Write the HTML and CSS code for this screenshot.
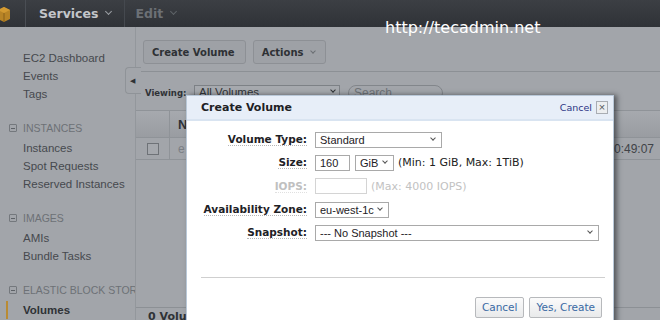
FILE: index.html
```html
<!DOCTYPE html>
<html lang="en">
<head>
  <meta charset="UTF-8">
  <title>EC2 Management Console - Create Volume</title>
  <link rel="stylesheet" href="styles.css">
</head>
<body>
  <div class="topbar">
    <div class="logo">
      <svg width="12" height="16" viewBox="0 0 12 16"><path d="M0 4 L6 1 L12 4 L12 13 L6 16 L0 13 Z" fill="#b88426"/><path d="M0 4 L6 7 L12 4 L6 1 Z" fill="#d39a31"/><path d="M6 7 L6 16" stroke="#8a6119" stroke-width="1"/></svg>
    </div>
    <div class="menu">Services <span class="chev"></span></div>
    <div class="menu disabled">Edit <span class="chev"></span></div>
  </div>

  <div class="layout">
    <div class="sidebar">
      <div class="nav-item">EC2 Dashboard</div>
      <div class="nav-item">Events</div>
      <div class="nav-item">Tags</div>

      <div class="nav-head"><span class="minus"></span>INSTANCES</div>
      <div class="nav-item">Instances</div>
      <div class="nav-item">Spot Requests</div>
      <div class="nav-item">Reserved Instances</div>

      <div class="nav-head"><span class="minus"></span>IMAGES</div>
      <div class="nav-item">AMIs</div>
      <div class="nav-item">Bundle Tasks</div>

      <div class="nav-head"><span class="minus"></span>ELASTIC BLOCK STORE</div>
      <div class="nav-item active">Volumes</div>
    </div>

    <div class="main">
      <div class="toolbar">
        <div class="tb-btn">Create Volume</div>
        <div class="tb-btn">Actions <span class="chev"></span></div>
      </div>
      <div class="filter">
        <span class="viewing">Viewing:</span>
        <div class="fake-select">All Volumes <span class="arr"></span></div>
        <div class="search">Search</div>
      </div>
      <div class="table">
        <div class="thead"><div class="cell-check"></div><div class="cell-name">N</div></div>
        <div class="trow">
          <div class="cell-check"><span class="checkbox"></span></div>
          <div class="cell-name dim">e</div>
          <div class="cell-time">10:49:07</div>
        </div>
      </div>
      <div class="footer-bar">0 Volumes selected</div>
    </div>
  </div>

  <div class="collapse-tab">&#9664;</div>

  <div class="watermark">http://tecadmin.net</div>

  <div class="dialog">
    <div class="dlg-head">
      <span class="dlg-title">Create Volume</span>
      <span class="dlg-close"><a>Cancel</a><span class="xbox">&#215;</span></span>
    </div>
    <div class="dlg-body">
      <div class="form-row">
        <label><span>Volume Type:</span></label>
        <div class="ctl"><div class="sel w-type">Standard <span class="arr"></span></div></div>
      </div>
      <div class="form-row">
        <label><span>Size:</span></label>
        <div class="ctl">
          <div class="inp w-size">160</div>
          <div class="sel w-unit">GiB <span class="arr"></span></div>
          <span class="hint">(Min: 1 GiB, Max: 1TiB)</span>
        </div>
      </div>
      <div class="form-row off">
        <label><span>IOPS:</span></label>
        <div class="ctl">
          <div class="inp w-iops"></div>
          <span class="hint">(Max: 4000 IOPS)</span>
        </div>
      </div>
      <div class="form-row">
        <label><span>Availability Zone:</span></label>
        <div class="ctl"><div class="sel w-zone">eu-west-1c <span class="arr"></span></div></div>
      </div>
      <div class="form-row">
        <label><span>Snapshot:</span></label>
        <div class="ctl"><div class="sel w-snap">--- No Snapshot --- <span class="arr"></span></div></div>
      </div>
      <div class="dlg-rule"></div>
      <div class="dlg-actions">
        <div class="btn">Cancel</div>
        <div class="btn">Yes, Create</div>
      </div>
    </div>
  </div>
</body>
</html>
```

FILE: styles.css
```css
* { box-sizing: border-box; }
body { margin: 0; width: 660px; height: 320px; overflow: hidden; position: relative; background: #a2a5aa; font-family: "Liberation Sans", Arial, sans-serif; font-size: 12px; color: #45484d; }

/* little chevrons used by menus and selects */
.chev, .arr { display: inline-block; width: 5px; height: 5px; border-right: 1.5px solid currentColor; border-bottom: 1.5px solid currentColor; transform: rotate(45deg); }

.topbar { height: 27px; background: linear-gradient(#3c3f44, #2f3237); display: flex; align-items: center; }
.logo { width: 26px; height: 27px; border-right: 1px solid #4a4e54; display: flex; align-items: center; }
.logo svg { margin-left: -2px; }
.menu { font-family: "DejaVu Sans", Verdana, sans-serif; font-weight: bold; font-size: 12.5px; color: #c3c6ca; padding: 0 13px; height: 27px; display: flex; align-items: center; gap: 8px; border-right: 1px solid #45494f; }
.menu .chev { color: #9a9ea3; margin-top: -4px; }
.menu.disabled { color: #6c7075; border-right: none; padding-left: 10px; }
.menu.disabled .chev { color: #5f6368; }

.layout { display: flex; height: 293px; }
.sidebar { width: 136px; border-right: 1px solid #93979c; padding-top: 22px; overflow: hidden; }
.nav-item { height: 18px; line-height: 18px; padding-left: 23px; color: #46494e; font-size: 11.5px; white-space: nowrap; }
.nav-head { height: 20px; margin-top: 16px; padding: 0 0 2px 9px; color: #6d7176; font-size: 10.5px; white-space: nowrap; display: flex; align-items: center; gap: 6px; }
.minus { width: 8px; height: 8px; border: 1px solid #74787d; border-radius: 1px; position: relative; flex: none; }
.minus::after { content: ''; position: absolute; left: 1px; right: 1px; top: 2.5px; height: 1px; background: #5d6166; }
.nav-item.active { font-weight: bold; color: #2f3236; position: relative; }
.nav-item.active::before { content: ''; position: absolute; left: 6px; top: 0; width: 2px; height: 18px; background: #b98b35; }

.main { flex: 1; display: flex; flex-direction: column; min-width: 0; }
.toolbar { display: flex; gap: 7px; padding: 13px 0 7px 3px; margin-left: 4px; border-bottom: 1px solid #8c9095; }
.tb-btn { height: 24px; padding: 0 10px 0 8px; background: #9ea1a6; border: 1px solid #8d9095; border-radius: 3px; font-family: "DejaVu Sans", Verdana, sans-serif; font-weight: bold; font-size: 10px; color: #2e3135; display: flex; align-items: center; gap: 8px; }
.tb-btn .chev { color: #6b6f74; margin-top: -3px; width: 4px; height: 4px; }
.filter { display: flex; align-items: center; height: 38px; padding-left: 9px; padding-top: 3px; }
.viewing { font-family: "DejaVu Sans", Verdana, sans-serif; font-size: 8.5px; font-weight: bold; color: #2f3236; width: 49px; }
.fake-select { width: 146px; height: 15px; border: 1px solid #7d8186; background: #a6a9ae; color: #2f3236; font-size: 11.5px; line-height: 13px; padding-left: 4px; position: relative; }
.fake-select .arr { position: absolute; right: 4px; top: 2px; width: 4px; height: 4px; }
.search { margin-left: 8px; width: 95px; height: 16px; border: 1px solid #82868b; border-radius: 8px; color: #6f7378; line-height: 14px; padding-left: 5px; }

.thead { height: 27px; background: linear-gradient(#a6a9ae, #999ca1); border-top: 1px solid #8f9398; display: flex; }
.thead .cell-name { font-weight: bold; color: #2f3236; font-size: 13px; padding-left: 8px; line-height: 28px; }
.cell-check { width: 34px; border-right: 1px solid #8f9398; display: flex; align-items: center; justify-content: center; }
.trow { height: 23px; border-top: 1px solid #8f9398; border-bottom: 1px solid #8f9398; display: flex; align-items: center; }
.trow .cell-check { height: 100%; }
.checkbox { width: 12px; height: 12px; border: 1px solid #6e7277; background: #a5a8ad; }
.cell-name { flex: 1; padding-left: 8px; }
.dim { color: #7b7f84; }
.cell-time { padding-right: 6px; color: #404348; font-size: 12px; }

.footer-bar { margin-top: auto; height: 13px; border-top: 1px solid #8c9095; font-family: "DejaVu Sans", Verdana, sans-serif; font-weight: bold; font-size: 11px; color: #2f3236; padding-left: 12px; line-height: 18px; white-space: nowrap; overflow: hidden; }

.collapse-tab { position: absolute; left: 125px; top: 67px; width: 16px; height: 27px; background: #a2a5aa; border: 1px solid #8f9398; border-right: none; border-radius: 4px 0 0 4px; font-size: 7px; color: #2f3236; display: flex; align-items: center; justify-content: center; padding-right: 3px; }

.watermark { position: absolute; left: 385px; top: 18px; font-family: "DejaVu Sans", Verdana, sans-serif; font-size: 16px; color: #ffffff; }

.dialog { position: absolute; left: 186px; top: 95px; width: 428px; height: 240px; background: #fff; border: 1px solid #b9c8d8; box-shadow: 3px 0 5px rgba(20,22,26,0.55); }
.dlg-head { height: 25px; background: #e7eef8; border-bottom: 2px solid #d9e4f1; display: flex; align-items: center; justify-content: space-between; padding: 0 5px 0 14px; }
.dlg-title { font-family: "DejaVu Sans", Verdana, sans-serif; font-weight: bold; font-size: 11px; color: #1d2024; }
.dlg-close { display: flex; align-items: center; gap: 4px; }
.dlg-close a { font-family: "DejaVu Sans", Verdana, sans-serif; font-size: 9.5px; color: #2c3585; }
.xbox { width: 12px; height: 13px; border: 1px solid #a9adb3; background: #eceef0; color: #55595e; font-size: 11px; line-height: 10px; text-align: center; }

.dlg-body { padding-top: 7px; }
.form-row { display: flex; align-items: center; height: 23.3px; }
.form-row label { width: 120px; text-align: right; font-family: "DejaVu Sans", Verdana, sans-serif; font-weight: bold; font-size: 10.5px; color: #1e2125; line-height: 13px; }
.form-row label span { border-bottom: 1px dotted #b6b6b6; }
.ctl { display: flex; align-items: center; gap: 5px; margin-left: 8px; }
.sel, .inp { height: 16px; border: 1px solid #a9a9a9; font-size: 11px; line-height: 14px; padding-left: 4px; color: #1e2125; position: relative; background: #fff; }
.sel .arr { position: absolute; right: 6px; top: 3px; width: 4px; height: 4px; color: #555; border-width: 1.2px; }
.w-type { width: 127px; }
.w-size { width: 35px; }
.w-unit { width: 39px; }
.w-iops { width: 52px; border-color: #d4d4d4; }
.w-zone { width: 74px; }
.w-snap { width: 284px; }
.hint { font-family: "DejaVu Sans", Verdana, sans-serif; font-size: 11px; color: #222; margin-left: -1px; }
.form-row.off label { color: #c0c0c0; }
.form-row.off label span { border-bottom-color: #e0e0e0; }
.form-row.off .hint { color: #c2c2c2; }

.dlg-rule { margin: 33px 8px 0 14px; border-top: 1px solid #cfcfcf; }
.dlg-actions { display: flex; justify-content: flex-end; gap: 5px; padding: 19px 11px 0 0; }
.btn { height: 21px; padding: 0 6px; border: 1px solid #b7b9bc; border-radius: 2px; background: linear-gradient(#fbfbfb, #e9eaeb); font-family: "DejaVu Sans", Verdana, sans-serif; font-size: 10.5px; color: #3a6aa4; line-height: 19px; }
```
